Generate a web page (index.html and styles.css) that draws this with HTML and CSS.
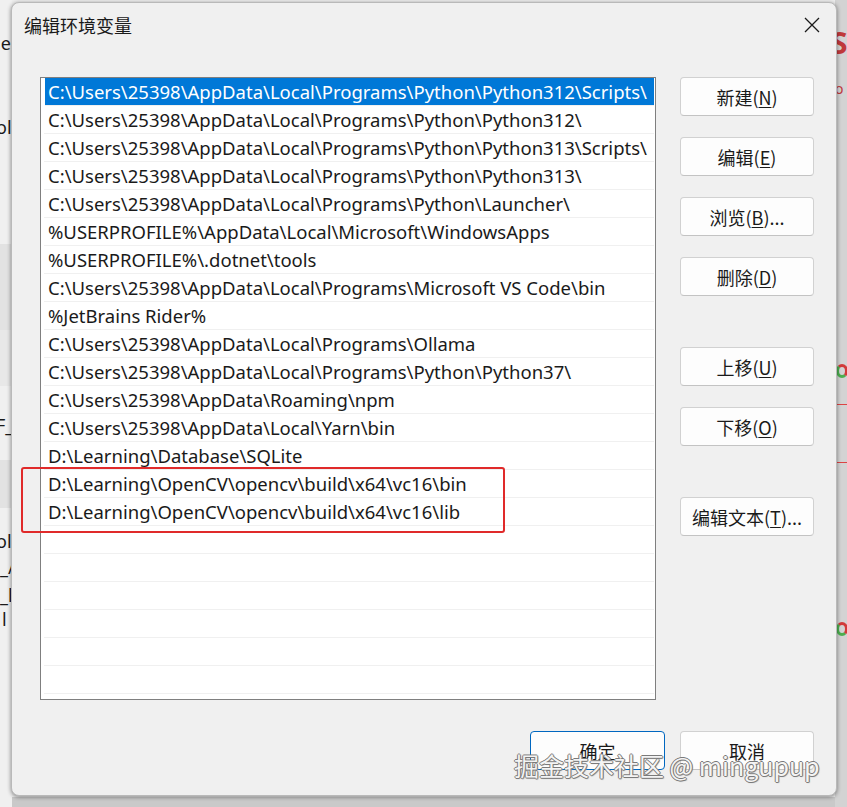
FILE: index.html
```html
<!DOCTYPE html>
<html lang="zh-CN">
<head>
<meta charset="utf-8">
<title>编辑环境变量</title>
<link rel="stylesheet" href="styles.css">
</head>
<body>
<div class="desktop">
  <div class="bg-left">
    <span class="frag f1">le</span>
    <span class="frag f2">ols</span>
    <span class="band b1"></span>
    <span class="band b2"></span>
    <span class="frag f3">F_</span>
    <span class="band b3"></span>
    <span class="frag f4">ols</span>
    <span class="frag f5">_/</span>
    <span class="frag f6">_l</span>
    <span class="frag f7">l</span>
  </div>
  <div class="bg-right">
    <span class="rfrag r1">S</span>
    <span class="rfrag r2">o</span>
    <span class="ricon i1"></span>
    <span class="rline l1"></span>
    <span class="rline l2"></span>
    <span class="ricon i2"></span>
  </div>

  <div class="dialog">
    <div class="titlebar">
      <span class="title">编辑环境变量</span>
      <svg class="close" width="16" height="16" viewBox="0 0 16 16"><path d="M1 1 L15 15 M15 1 L1 15" stroke="#1a1a1a" stroke-width="1.3" fill="none"/></svg>
    </div>
    <div class="body">
      <div class="listbox">
        <div class="row selected">C:\Users\25398\AppData\Local\Programs\Python\Python312\Scripts\</div>
        <div class="row">C:\Users\25398\AppData\Local\Programs\Python\Python312\</div>
        <div class="row">C:\Users\25398\AppData\Local\Programs\Python\Python313\Scripts\</div>
        <div class="row">C:\Users\25398\AppData\Local\Programs\Python\Python313\</div>
        <div class="row">C:\Users\25398\AppData\Local\Programs\Python\Launcher\</div>
        <div class="row">%USERPROFILE%\AppData\Local\Microsoft\WindowsApps</div>
        <div class="row">%USERPROFILE%\.dotnet\tools</div>
        <div class="row">C:\Users\25398\AppData\Local\Programs\Microsoft VS Code\bin</div>
        <div class="row">%JetBrains Rider%</div>
        <div class="row">C:\Users\25398\AppData\Local\Programs\Ollama</div>
        <div class="row">C:\Users\25398\AppData\Local\Programs\Python\Python37\</div>
        <div class="row">C:\Users\25398\AppData\Roaming\npm</div>
        <div class="row">C:\Users\25398\AppData\Local\Yarn\bin</div>
        <div class="row">D:\Learning\Database\SQLite</div>
        <div class="row">D:\Learning\OpenCV\opencv\build\x64\vc16\bin</div>
        <div class="row">D:\Learning\OpenCV\opencv\build\x64\vc16\lib</div>
        <div class="row"></div>
        <div class="row"></div>
        <div class="row"></div>
        <div class="row"></div>
        <div class="row"></div>
        <div class="row"></div>
      </div>
      <div class="side">
        <div class="group">
          <button class="btn">新建(<u>N</u>)</button>
          <button class="btn">编辑(<u>E</u>)</button>
          <button class="btn">浏览(<u>B</u>)...</button>
          <button class="btn">删除(<u>D</u>)</button>
        </div>
        <div class="group">
          <button class="btn">上移(<u>U</u>)</button>
          <button class="btn">下移(<u>O</u>)</button>
        </div>
        <div class="group">
          <button class="btn">编辑文本(<u>T</u>)...</button>
        </div>
      </div>
    </div>
    <div class="footer">
      <button class="btn primary">确定</button>
      <button class="btn">取消</button>
    </div>
  </div>

  <div class="highlight"></div>
  <div class="watermark">掘金技术社区 @ mingupup</div>
</div>
</body>
</html>
```

FILE: styles.css
```css
* { box-sizing: border-box; }

html, body {
  margin: 0;
  padding: 0;
}

body {
  width: 847px;
  height: 807px;
  overflow: hidden;
  background: #d9d9d9;
  font-family: "Noto Sans", "Noto Sans CJK SC", sans-serif;
  color: #1a1a1a;
}

.desktop {
  position: relative;
  width: 847px;
  height: 807px;
  background: linear-gradient(#ededed 0, #ededed 797px, #c9c9c9 797px);
}

/* background windows peeking out */
.bg-left {
  position: absolute;
  left: 0;
  top: 0;
  width: 12px;
  height: 807px;
  background: #f0f0f0;
  overflow: hidden;
}
.frag {
  position: absolute;
  left: -2px;
  font-size: 18px;
  color: #1a1a1a;
  line-height: 1;
}
.f1 { top: 34px; left: -4px; }
.f2 { top: 118px; left: -4px; }
.f3 { top: 416px; left: -4px; }
.f4 { top: 532px; left: -4px; }
.f5 { top: 558px; left: 0; }
.f6 { top: 586px; left: 0; }
.f7 { top: 610px; left: 2px; }
.band { position: absolute; left: 0; width: 12px; background: #e2e2e2; }
.b1 { top: 244px; height: 86px; }
.b2 { top: 330px; height: 56px; background: #e8e8e8; }
.b3 { top: 460px; height: 48px; }

.bg-right {
  position: absolute;
  right: 0;
  top: 0;
  width: 12px;
  height: 807px;
  background: #d3d3d3;
  overflow: hidden;
}
.rfrag { position: absolute; font-size: 30px; color: #c0393b; line-height: 1; }
.r1 { top: 28px; left: -4px; font-weight: bold; }
.r2 { top: 82px; left: 0; font-size: 14px; }
.ricon {
  position: absolute;
  left: 1px;
  width: 12px;
  height: 14px;
  border-radius: 50%;
  border: 3px solid #d23a3a;
  border-left-color: #4caf50;
  border-bottom-color: #4caf50;
}
.i1 { top: 364px; }
.i2 { top: 622px; }
.rline { position: absolute; left: 0; width: 12px; height: 1px; background: #d44; }
.l1 { top: 404px; }
.l2 { top: 462px; }

/* dialog window */
.dialog {
  position: absolute;
  left: 11px;
  top: 2px;
  width: 826px;
  height: 794px;
  background: #f0f0f0;
  border: 1px solid #b9b9b9;
  border-radius: 8px;
  box-shadow: 0 1px 4px rgba(0, 0, 0, 0.45);
  display: flex;
  flex-direction: column;
}

.titlebar {
  height: 42px;
  display: flex;
  align-items: center;
  justify-content: space-between;
  padding: 0 16px 0 12px;
}
.title {
  font-family: "Noto Sans CJK SC", sans-serif;
  font-size: 18px;
  line-height: 1;
  margin-top: 2px;
}
.close { display: block; margin-top: 1px; }

.body {
  display: flex;
  gap: 24px;
  padding: 32px 22px 0 28px;
}

.listbox {
  width: 616px;
  height: 623px;
  background: #fff;
  border: 1px solid #7f7f7f;
  overflow: hidden;
}

.row {
  height: 28px;
  margin: 0 1px 0 3px;
  padding: 0 0 0 4px;
  border-bottom: 1px solid #f0f0f0;
  font-size: 18.5px;
  line-height: 27px;
  white-space: nowrap;
}
.row.selected {
  background: #0078d7;
  color: #fff;
  margin-left: 4px;
  padding-left: 3px;
}

.side {
  display: flex;
  flex-direction: column;
  gap: 51px;
}
.group {
  display: flex;
  flex-direction: column;
  gap: 21px;
}

.btn {
  width: 134px;
  height: 39px;
  background: #fdfdfd;
  border: 1px solid #d1d1d1;
  border-bottom-color: #c3c3c3;
  border-radius: 4px;
  font-family: "Noto Sans CJK SC", sans-serif;
  font-size: 18px;
  color: #1a1a1a;
  padding: 0;
  line-height: 1;
}
.btn u { text-underline-offset: 2px; text-decoration-thickness: 1px; }
.btn.primary {
  border: 1px solid #0067c0;
  width: 135px;
}

.footer {
  display: flex;
  justify-content: flex-end;
  gap: 15px;
  padding: 31px 22px 0 0;
}

/* red annotation */
.highlight {
  position: absolute;
  left: 21px;
  top: 467px;
  width: 484px;
  height: 66px;
  border: 2px solid #e02a2a;
  border-radius: 3px;
}

.watermark {
  position: absolute;
  left: 514px;
  top: 750px;
  font-family: "Noto Sans CJK SC", sans-serif;
  font-size: 25px;
  line-height: 1.2;
  color: #f4f4f4;
  text-shadow: 1px 0 0 #7a7a7a, -1px 0 0 #7a7a7a, 0 1px 0 #7a7a7a, 0 -1px 0 #7a7a7a, 1px 1px 1px #9a9a9a;
  white-space: nowrap;
}
```
